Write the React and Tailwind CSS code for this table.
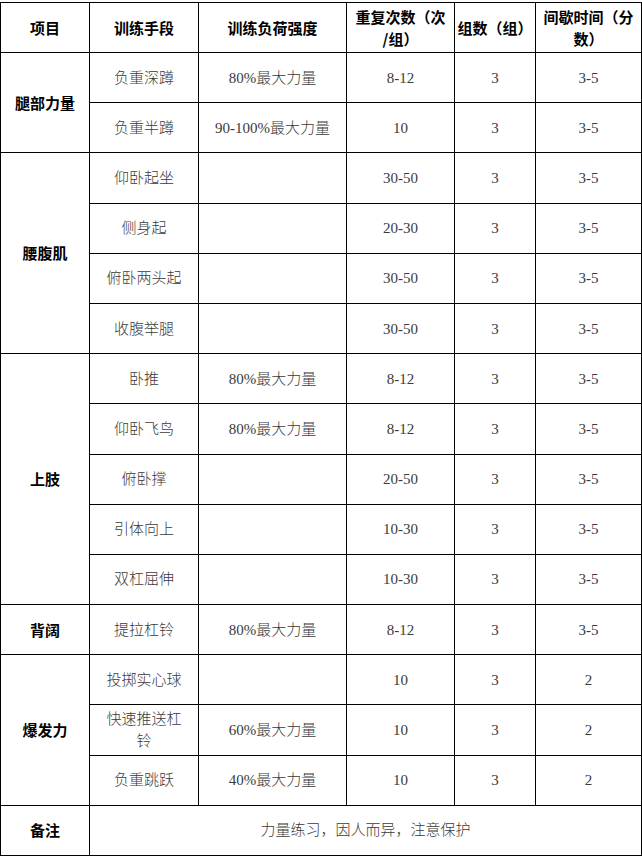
const rows = [
  { group: "腿部力量", span: 2, name: "负重深蹲", load: "80%最大力量", reps: "8-12", sets: "3", rest: "3-5" },
  { name: "负重半蹲", load: "90-100%最大力量", reps: "10", sets: "3", rest: "3-5" },
  { group: "腰腹肌", span: 4, name: "仰卧起坐", load: "", reps: "30-50", sets: "3", rest: "3-5" },
  { name: "侧身起", load: "", reps: "20-30", sets: "3", rest: "3-5" },
  { name: "俯卧两头起", load: "", reps: "30-50", sets: "3", rest: "3-5" },
  { name: "收腹举腿", load: "", reps: "30-50", sets: "3", rest: "3-5" },
  { group: "上肢", span: 5, name: "卧推", load: "80%最大力量", reps: "8-12", sets: "3", rest: "3-5" },
  { name: "仰卧飞鸟", load: "80%最大力量", reps: "8-12", sets: "3", rest: "3-5" },
  { name: "俯卧撑", load: "", reps: "20-50", sets: "3", rest: "3-5" },
  { name: "引体向上", load: "", reps: "10-30", sets: "3", rest: "3-5" },
  { name: "双杠屈伸", load: "", reps: "10-30", sets: "3", rest: "3-5" },
  { group: "背阔", span: 1, name: "提拉杠铃", load: "80%最大力量", reps: "8-12", sets: "3", rest: "3-5" },
  { group: "爆发力", span: 3, name: "投掷实心球", load: "", reps: "10", sets: "3", rest: "2" },
  { name: <>快速推送杠<br />铃</>, load: "60%最大力量", reps: "10", sets: "3", rest: "2" },
  { name: "负重跳跃", load: "40%最大力量", reps: "10", sets: "3", rest: "2" },
];

const cell = "border border-black text-center align-middle p-0";
const head = `${cell} font-bold text-black font-['Noto_Sans_CJK_SC',sans-serif] text-[15px] leading-[22px]`;
const body = `${cell} text-[#3a3a3a] font-light font-['Liberation_Serif','Noto_Sans_CJK_SC',serif] text-[15px] leading-[22px]`;

export default function App() {
  return (
    <div className="w-[642px] h-[857px] bg-white pt-[2px]">
      <table className="table-fixed border-collapse w-[641px]">
        <colgroup>
          <col className="w-[89px]" />
          <col className="w-[109px]" />
          <col className="w-[148px]" />
          <col className="w-[108px]" />
          <col className="w-[81px]" />
          <col className="w-[106px]" />
        </colgroup>
        <tbody>
          <tr className="h-[50px]">
            <td className={head}>项目</td>
            <td className={head}>训练手段</td>
            <td className={head}>训练负荷强度</td>
            <td className={head}>重复次数（次<br />/组）</td>
            <td className={head}>组数（组）</td>
            <td className={head}>间歇时间（分<br />数）</td>
          </tr>
          {rows.map((r, i) => (
            <tr key={i} className="h-[50.2px]">
              {r.group && (
                <td rowSpan={r.span} className={head}>{r.group}</td>
              )}
              <td className={body}>{r.name}</td>
              <td className={body}>{r.load}</td>
              <td className={body}>{r.reps}</td>
              <td className={body}>{r.sets}</td>
              <td className={body}>{r.rest}</td>
            </tr>
          ))}
          <tr className="h-[50px]">
            <td className={head}>备注</td>
            <td colSpan={5} className={body}>力量练习，因人而异，注意保护</td>
          </tr>
        </tbody>
      </table>
    </div>
  );
}
